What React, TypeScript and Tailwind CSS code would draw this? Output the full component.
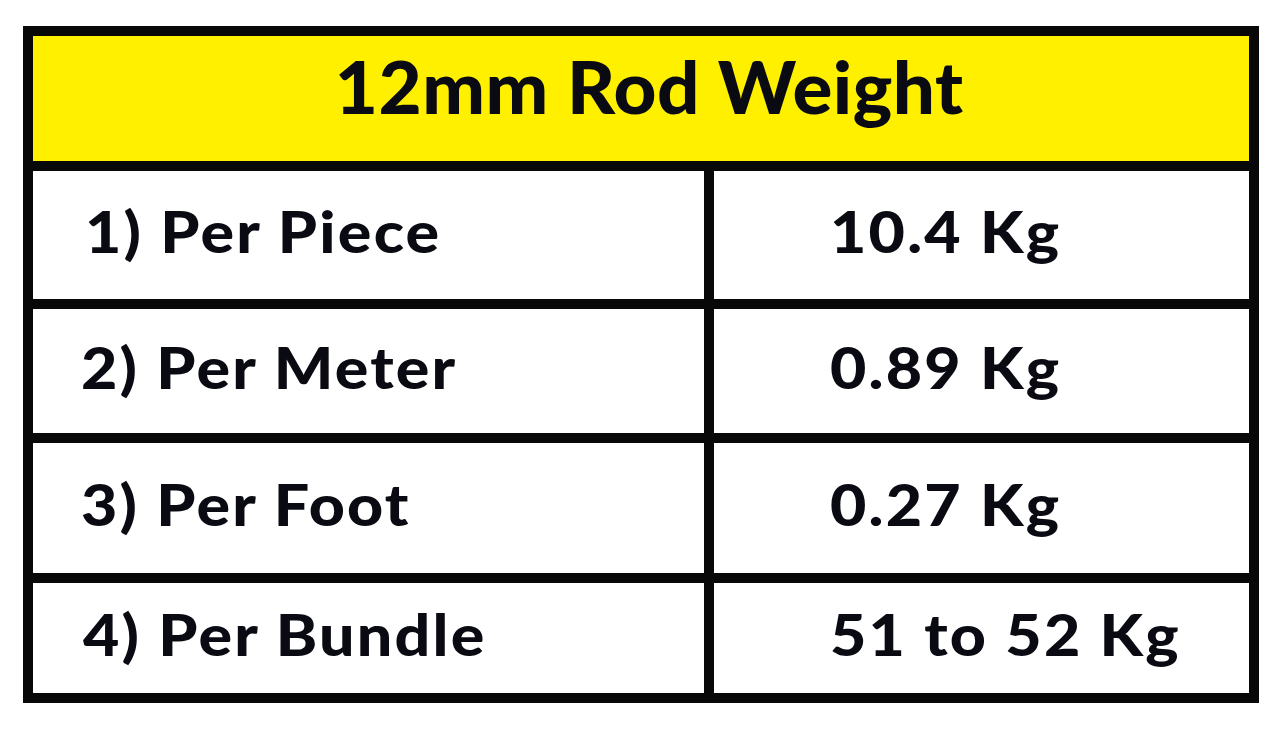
import React from "react";

const rows = [
  { label: "1) Per Piece", value: "10.4 Kg", h: "h-[128px]", pl: "pl-[52px]" },
  { label: "2) Per Meter", value: "0.89 Kg", h: "h-[124px]", pl: "pl-[48px]" },
  { label: "3) Per Foot", value: "0.27 Kg", h: "h-[130px]", pl: "pl-[48px]" },
  { label: "4) Per Bundle", value: "51 to 52 Kg", h: "h-[110px]", pl: "pl-[50px]" },
];

export default function App() {
  return (
    <div
      className="w-[1280px] h-[729px] bg-white overflow-hidden pt-[26px] pl-[23px]"
      style={{ fontFamily: "Lato, 'Open Sans', sans-serif" }}
    >
      <div className="w-[1236px] bg-[#080808] p-[10px] grid grid-cols-[671px_535px] gap-[10px]">
        <div className="col-span-2 h-[125px] bg-[#fff000] flex items-center justify-center text-[#0a0a12] font-black text-[73px] leading-none pb-[24px] pl-[16px]">
          <span className="inline-block scale-x-[1.02] tracking-[0.5px]">12mm Rod Weight</span>
        </div>
        {rows.map((r) => (
          <React.Fragment key={r.label}>
            <div
              className={`${r.h} bg-white flex items-center ${r.pl} text-[#0a0a12] font-black text-[57px] leading-none pb-[8px]`}
            >
              <span className="inline-block origin-left scale-x-[1.1] tracking-[2px] whitespace-pre">{r.label}</span>
            </div>
            <div
              className={`${r.h} bg-white flex items-center pl-[116px] text-[#0a0a12] font-black text-[57px] leading-none pb-[8px]`}
            >
              <span className="inline-block origin-left scale-x-[1.1] tracking-[2px] whitespace-pre">{r.value}</span>
            </div>
          </React.Fragment>
        ))}
      </div>
    </div>
  );
}
